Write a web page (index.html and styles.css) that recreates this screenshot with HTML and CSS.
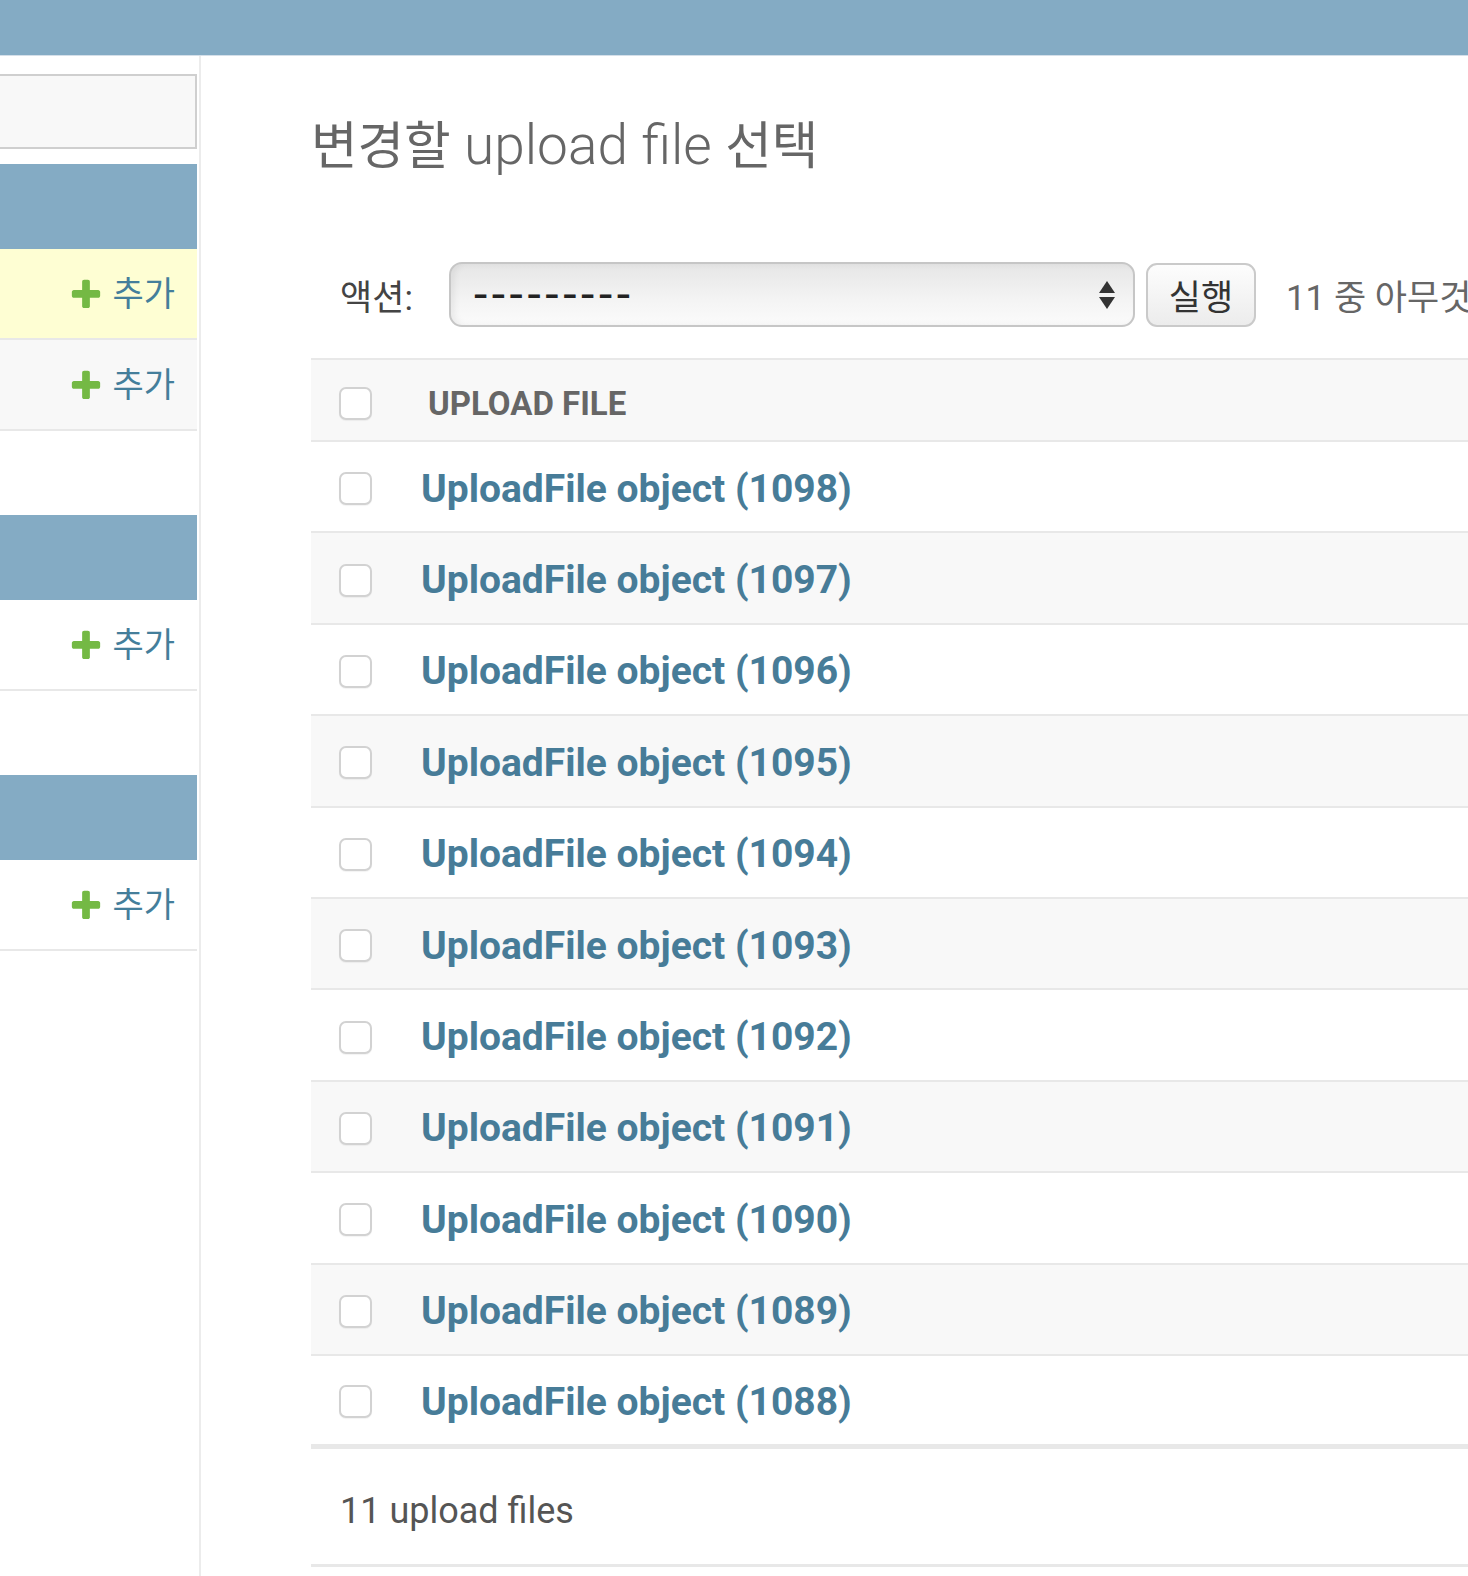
FILE: index.html
```html
<!DOCTYPE html>
<html lang="ko">
<head>
  <meta charset="UTF-8">
  <title>변경할 upload file 선택</title>
  <link rel="stylesheet" href="styles.css">
</head>
<body>
<div class="header"></div>

<div class="main">

  <!-- 사이드바 -->
  <nav class="sidebar">
    <div class="nav-filter"></div>

    <div class="module">
      <div class="caption"></div>
      <div class="model-row current">
        <a class="addlink" href="#"><svg class="plus" viewBox="0 0 1792 1792"><path d="M1600 796v192q0 40-28 68t-68 28h-416v416q0 40-28 68t-68 28h-192q-40 0-68-28t-28-68v-416h-416q-40 0-68-28t-28-68v-192q0-40 28-68t68-28h416v-416q0-40 28-68t68-28h192q40 0 68 28t28 68v416h416q40 0 68 28t28 68z"/></svg>추가</a>
      </div>
      <div class="model-row alt">
        <a class="addlink" href="#"><svg class="plus" viewBox="0 0 1792 1792"><path d="M1600 796v192q0 40-28 68t-68 28h-416v416q0 40-28 68t-68 28h-192q-40 0-68-28t-28-68v-416h-416q-40 0-68-28t-28-68v-192q0-40 28-68t68-28h416v-416q0-40 28-68t68-28h192q40 0 68 28t28 68v416h416q40 0 68 28t28 68z"/></svg>추가</a>
      </div>
    </div>

    <div class="module">
      <div class="caption"></div>
      <div class="model-row">
        <a class="addlink" href="#"><svg class="plus" viewBox="0 0 1792 1792"><path d="M1600 796v192q0 40-28 68t-68 28h-416v416q0 40-28 68t-68 28h-192q-40 0-68-28t-28-68v-416h-416q-40 0-68-28t-28-68v-192q0-40 28-68t68-28h416v-416q0-40 28-68t68-28h192q40 0 68 28t28 68v416h416q40 0 68 28t28 68z"/></svg>추가</a>
      </div>
    </div>

    <div class="module">
      <div class="caption"></div>
      <div class="model-row">
        <a class="addlink" href="#"><svg class="plus" viewBox="0 0 1792 1792"><path d="M1600 796v192q0 40-28 68t-68 28h-416v416q0 40-28 68t-68 28h-192q-40 0-68-28t-28-68v-416h-416q-40 0-68-28t-28-68v-192q0-40 28-68t68-28h416v-416q0-40 28-68t68-28h192q40 0 68 28t28 68v416h416q40 0 68 28t28 68z"/></svg>추가</a>
      </div>
    </div>
  </nav>

  <!-- 본문 -->
  <div class="content">
    <h1 class="title"><span class="ko">변경할</span> upload file <span class="ko">선택</span></h1>

    <div class="actions">
      <span class="actions-label">액션:</span>
      <div class="select">
        <span class="blank">---------</span>
        <span class="arrows"><i class="up"></i><i class="down"></i></span>
      </div>
      <button class="go-btn">실행</button>
      <span class="action-counter">11 중 아무것도 선택되지 않았습니다</span>
    </div>

    <table class="result-list">
      <thead>
        <tr>
          <th class="col-check"><span class="cb"></span></th>
          <th class="col-name">UPLOAD FILE</th>
        </tr>
      </thead>
      <tbody>
        <tr><td class="col-check"><span class="cb"></span></td><td class="col-name"><a href="#">UploadFile object (1098)</a></td></tr>
        <tr><td class="col-check"><span class="cb"></span></td><td class="col-name"><a href="#">UploadFile object (1097)</a></td></tr>
        <tr><td class="col-check"><span class="cb"></span></td><td class="col-name"><a href="#">UploadFile object (1096)</a></td></tr>
        <tr><td class="col-check"><span class="cb"></span></td><td class="col-name"><a href="#">UploadFile object (1095)</a></td></tr>
        <tr><td class="col-check"><span class="cb"></span></td><td class="col-name"><a href="#">UploadFile object (1094)</a></td></tr>
        <tr><td class="col-check"><span class="cb"></span></td><td class="col-name"><a href="#">UploadFile object (1093)</a></td></tr>
        <tr><td class="col-check"><span class="cb"></span></td><td class="col-name"><a href="#">UploadFile object (1092)</a></td></tr>
        <tr><td class="col-check"><span class="cb"></span></td><td class="col-name"><a href="#">UploadFile object (1091)</a></td></tr>
        <tr><td class="col-check"><span class="cb"></span></td><td class="col-name"><a href="#">UploadFile object (1090)</a></td></tr>
        <tr><td class="col-check"><span class="cb"></span></td><td class="col-name"><a href="#">UploadFile object (1089)</a></td></tr>
        <tr><td class="col-check"><span class="cb"></span></td><td class="col-name"><a href="#">UploadFile object (1088)</a></td></tr>
      </tbody>
    </table>

    <p class="paginator">11 upload files</p>
  </div>

</div>
</body>
</html>
```

FILE: styles.css
```css
:root {
  --header-bg: #84abc4;
  --link: #477c98;
  --text-main: #333;
  --text-muted: #666;
  --border-soft: #e8e8e8;
  --row-alt: #f8f8f8;
  --add-green: #74b944;
}

* { box-sizing: border-box; }

body {
  margin: 0;
  font-family: Roboto, "Noto Sans CJK KR", sans-serif;
  color: var(--text-main);
  background: #fff;
  overflow: hidden;
}

.header {
  height: 56px;
  background: var(--header-bg);
  border-bottom: 1px solid #d4dfe9;
}

.main {
  display: flex;
  min-height: calc(100vh - 56px);
}

/* 사이드바 */

.sidebar {
  width: 201px;
  flex-shrink: 0;
  padding: 18px 2px 0 0;
  border-right: 2px solid #ececec;
}

.nav-filter {
  height: 75px;
  margin-bottom: 15px;
  background: #f8f8f8;
  border: 2px solid #cfcfcf;
  border-left: none;
}

.module {
  margin-bottom: 84px;
}

.caption {
  height: 85px;
  background: var(--header-bg);
}

.model-row {
  height: 91px;
  display: flex;
  align-items: center;
  justify-content: flex-end;
  padding-right: 22px;
  border-bottom: 2px solid var(--border-soft);
}

.model-row.current { background: #fefed3; }
.model-row.alt { background: var(--row-alt); }

.addlink {
  display: flex;
  align-items: center;
  color: #447e9b;
  text-decoration: none;
  font-size: 34px;
  line-height: 1;
}

.plus {
  width: 36px;
  height: 36px;
  margin-right: 8px;
  fill: var(--add-green);
}

/* 본문 */

.content {
  flex: 1;
  min-width: 0;
  padding-left: 110px;
}

.title {
  margin: 0;
  padding-top: 55px;
  font-size: 55px;
  line-height: 68px;
  font-weight: 300;
  color: var(--text-muted);
  white-space: nowrap;
}

.title .ko {
  font-size: 0.92em;
  font-weight: 400;
}

.actions {
  display: flex;
  align-items: center;
  height: 65px;
  margin-top: 81px;
  white-space: nowrap;
}

.actions-label {
  margin-left: 29px;
  margin-right: 36px;
  font-size: 35px;
  color: #444;
}

.select {
  width: 686px;
  height: 65px;
  flex-shrink: 0;
  display: flex;
  align-items: center;
  justify-content: space-between;
  padding: 0 18px 0 23px;
  border: 2px solid #c6c6c6;
  border-radius: 13px;
  background: linear-gradient(#e6e6e6, #f4f4f4 60%, #fbfbfb);
  box-shadow: inset 4px 0 6px rgba(0,0,0,0.06);
  color: #222;
}

.blank {
  font-size: 48px;
  letter-spacing: 4.6px;
  line-height: 1;
}

.arrows {
  display: flex;
  flex-direction: column;
  gap: 4px;
}

.arrows i {
  width: 0;
  height: 0;
  border-left: 8px solid transparent;
  border-right: 8px solid transparent;
}

.arrows .up { border-bottom: 12px solid #333; }
.arrows .down { border-top: 12px solid #333; }

.go-btn {
  width: 110px;
  height: 64px;
  flex-shrink: 0;
  margin-left: 11px;
  padding: 0;
  border: 2px solid #cacaca;
  border-radius: 11px;
  background: linear-gradient(#fdfdfd, #ececec);
  font-family: inherit;
  font-size: 35px;
  color: #333;
}

.action-counter {
  margin-left: 30px;
  font-size: 35px;
  color: var(--text-muted);
}

/* 목록 */

.result-list {
  width: 100%;
  margin-top: 31px;
  border-collapse: collapse;
}

.result-list thead th {
  height: 82px;
  padding-top: 7px;
  background: var(--row-alt);
  border-top: 2px solid var(--border-soft);
  border-bottom: 2px solid var(--border-soft);
  text-align: left;
  vertical-align: middle;
}

.result-list th.col-name {
  padding-left: 8px;
  font-size: 33px;
  font-weight: 700;
  color: var(--text-muted);
}

.result-list td {
  height: 91.4px;
  padding-top: 5px;
  border-bottom: 2px solid var(--border-soft);
  vertical-align: middle;
}

.result-list tbody tr:nth-child(even) td { background: var(--row-alt); }
.result-list tbody tr:last-child td { border-bottom-width: 5px; }

.col-check {
  width: 109px;
  padding-left: 28px;
}

.result-list td.col-name a {
  color: var(--link);
  text-decoration: none;
  font-size: 39px;
  font-weight: 700;
}

.cb {
  display: block;
  width: 33px;
  height: 33px;
  border: 2px solid #d2d2d2;
  border-radius: 7px;
  background: #fff;
  box-shadow: 0 1px 1px rgba(0,0,0,0.05);
}

.paginator {
  margin: 0;
  height: 118px;
  padding: 6px 0 0 29px;
  line-height: 112px;
  font-size: 36px;
  color: #555;
  border-bottom: 3px solid var(--border-soft);
}
```
